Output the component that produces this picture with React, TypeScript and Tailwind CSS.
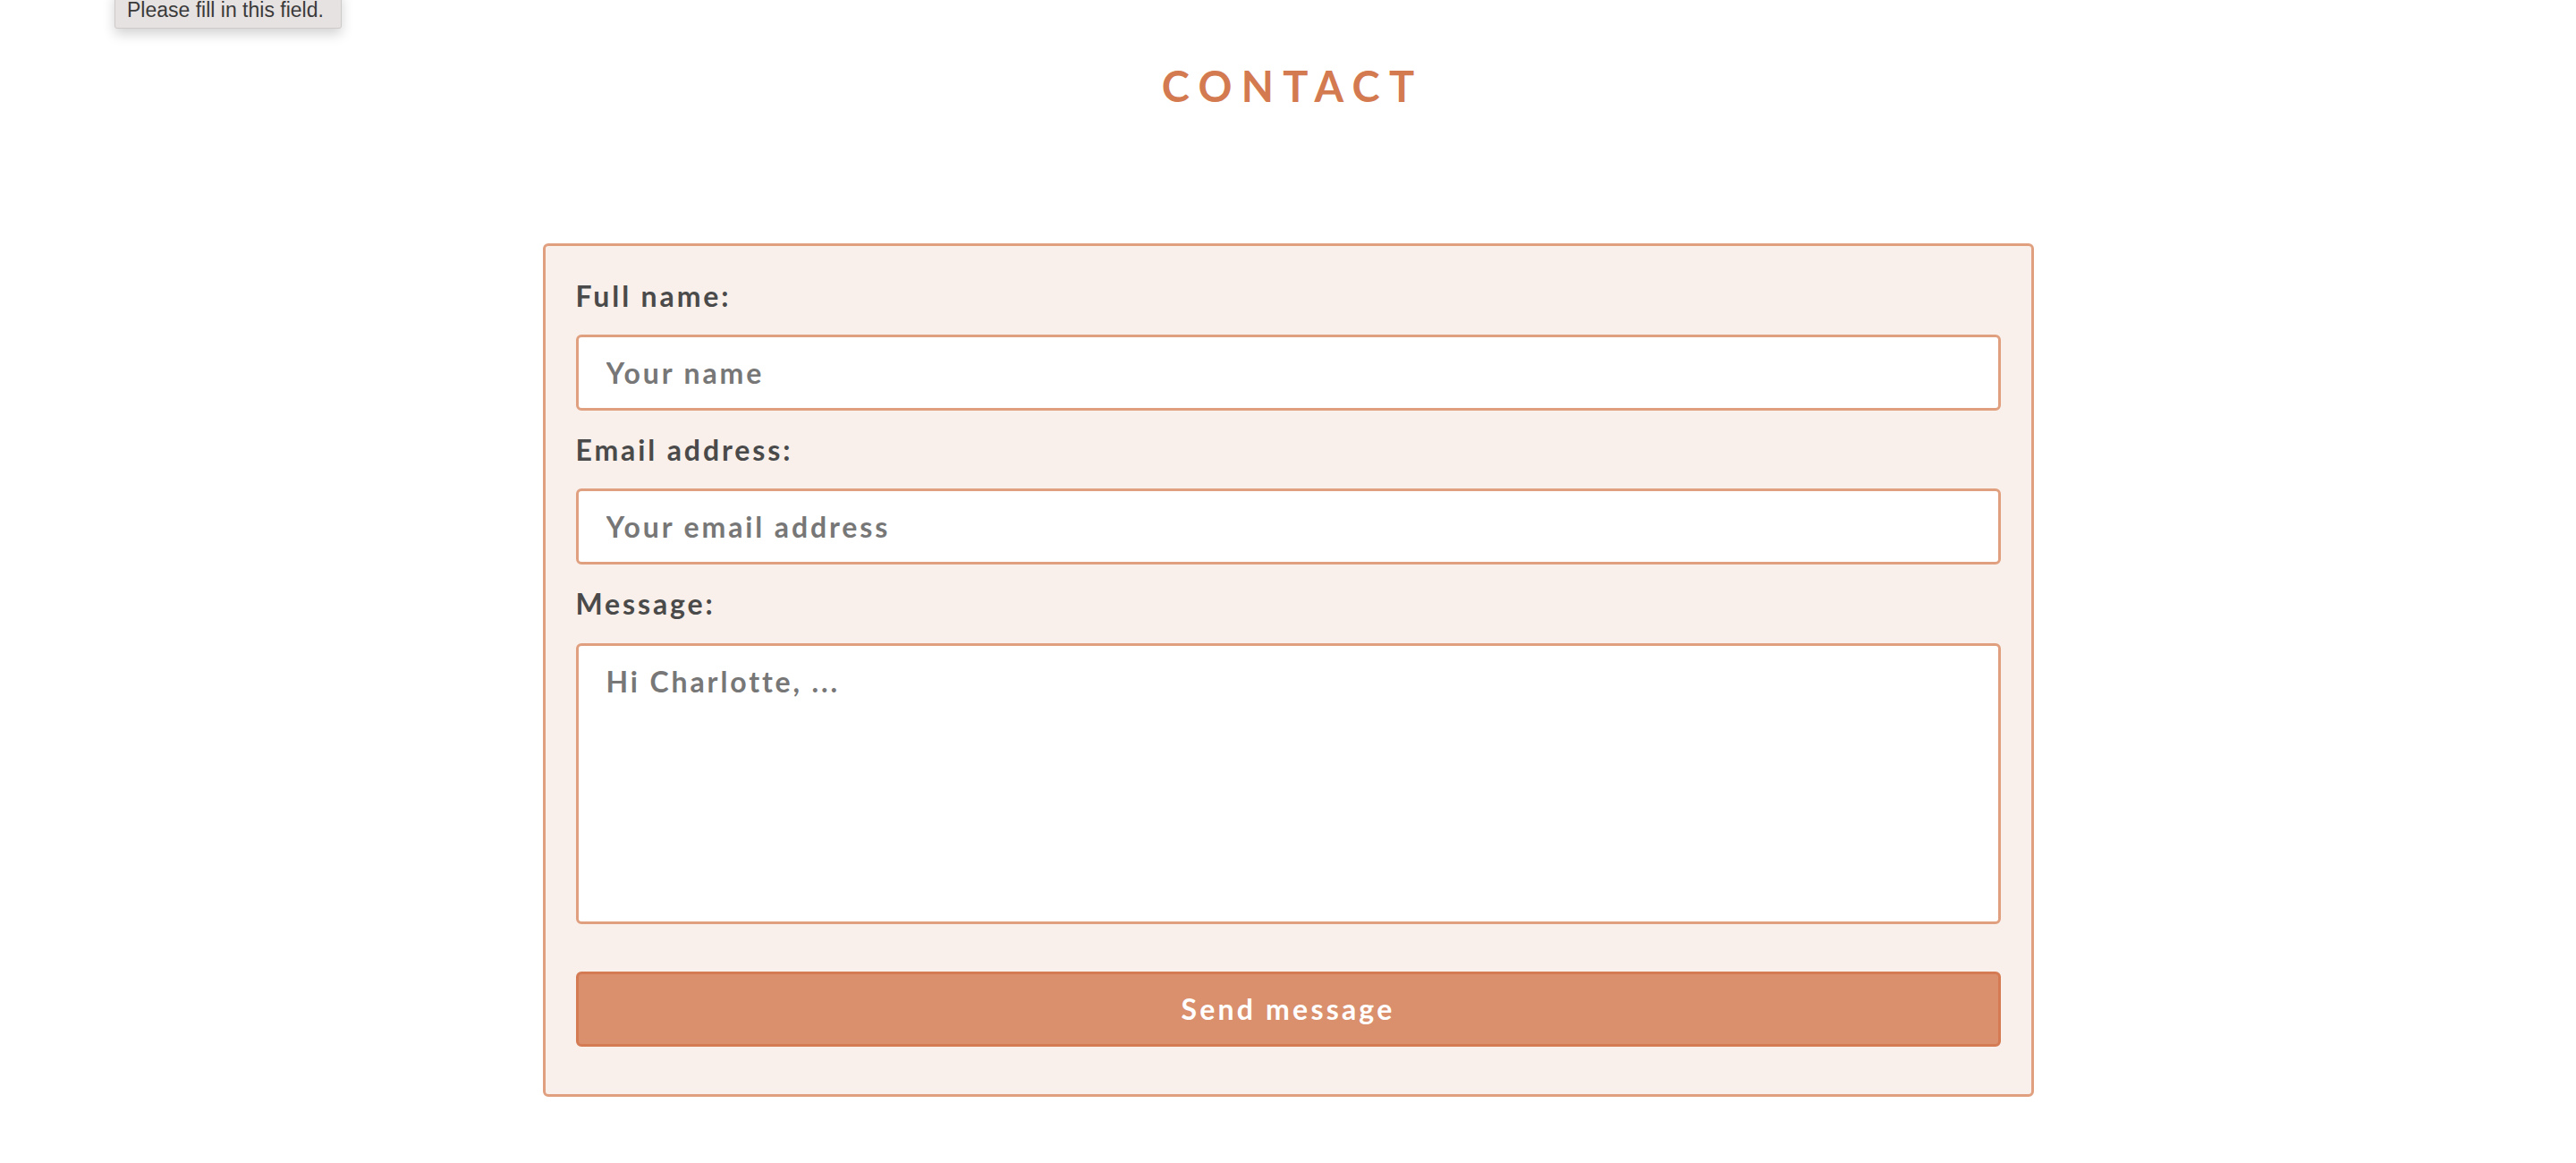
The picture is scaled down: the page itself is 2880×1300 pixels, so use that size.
import React from "react";

const ContactForm: React.FC = () => {
  return (
    <form
      className="mx-auto mt-[148px] flex w-[1667px] flex-col rounded-md border-[3px] border-[#e0a07f] bg-[#f9f0eb] px-[34px] pt-[37px] pb-[53px]"
      onSubmit={(e) => e.preventDefault()}
    >
      <label htmlFor="name" className="text-[32px] leading-[1.2] font-bold tracking-[0.09em] text-[#4a4a4a]">
        Full name:
      </label>
      <input
        id="name"
        required
        placeholder="Your name"
        className="mt-[23px] h-[85px] rounded-md border-[3px] border-[#e0a07f] bg-white px-[31px] text-[32px] font-bold tracking-[0.09em] text-[#4a4a4a] outline-none placeholder:text-[#777]"
      />
      <label htmlFor="email" className="mt-[25px] text-[32px] leading-[1.2] font-bold tracking-[0.09em] text-[#4a4a4a]">
        Email address:
      </label>
      <input
        id="email"
        type="email"
        placeholder="Your email address"
        className="mt-[24px] h-[85px] rounded-md border-[3px] border-[#e0a07f] bg-white px-[31px] text-[32px] font-bold tracking-[0.09em] text-[#4a4a4a] outline-none placeholder:text-[#777]"
      />
      <label htmlFor="message" className="mt-[25px] text-[32px] leading-[1.2] font-bold tracking-[0.09em] text-[#4a4a4a]">
        Message:
      </label>
      <textarea
        id="message"
        placeholder="Hi Charlotte, ..."
        className="mt-[24px] h-[314px] resize-none rounded-md border-[3px] border-[#e0a07f] bg-white px-[31px] pt-[21px] text-[32px] leading-[1.2] font-bold tracking-[0.09em] text-[#4a4a4a] outline-none placeholder:text-[#777]"
      />
      <button
        type="submit"
        className="mt-[53px] h-[84px] rounded-md border-[3px] border-[#d47b53] bg-[#da8f6d] text-[32px] font-bold tracking-[0.1em] text-white"
      >
        Send message
      </button>
    </form>
  );
};

export default function App() {
  return (
    <div className="relative min-h-[1300px] bg-white font-['Lato','Liberation_Sans',sans-serif]">
      <div className="absolute top-[-10px] left-[128px] flex h-[42px] w-[254px] items-end rounded-b-[3px] border border-[#cfcaca] bg-[#e7e2e2] pb-[8px] pl-[13px] font-['Liberation_Sans',sans-serif] text-[23px] leading-none text-[#3a3a3a] shadow-[0_6px_14px_rgba(0,0,0,0.18)]">
        Please fill in this field.
      </div>
      <h1 className="pt-[68px] pl-[0.22em] text-center text-[47px] leading-[1.2] font-bold tracking-[0.22em] text-[#d47a50]">
        CONTACT
      </h1>
      <ContactForm />
    </div>
  );
}
